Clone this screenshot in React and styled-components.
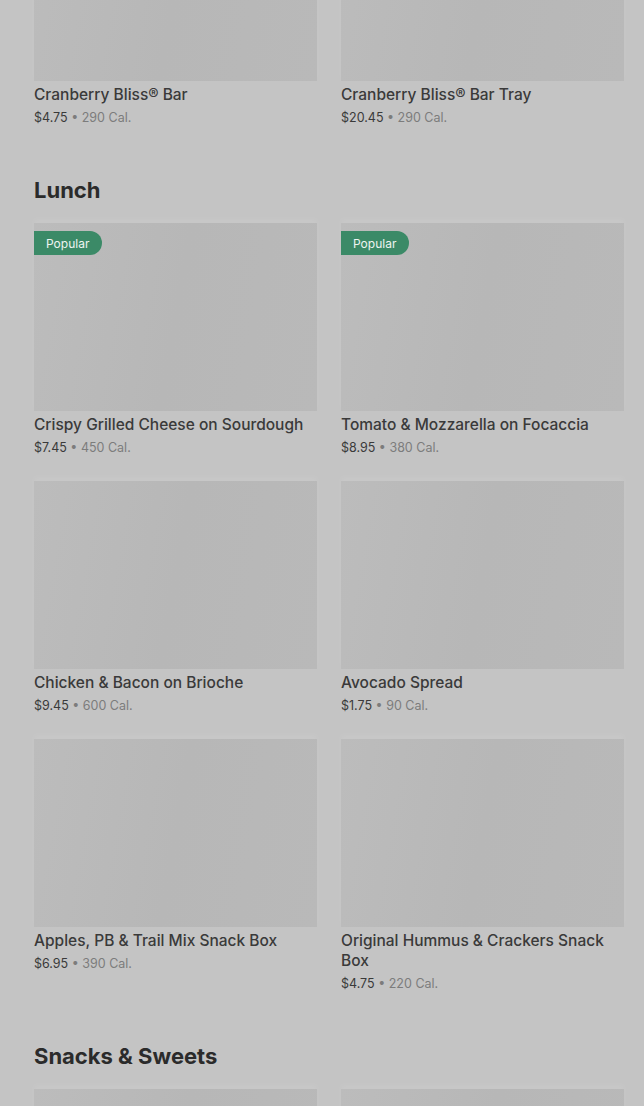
import React from "react";
import styled, { createGlobalStyle } from "styled-components";

const Global = createGlobalStyle`
  html, body { margin: 0; padding: 0; background: #c4c4c4; }
  body { font-family: Inter, "Noto Sans", sans-serif; overflow: hidden; }
`;

const Page = styled.div`
  padding: 0 20px 0 34px;
  background: #c4c4c4;
  height: 1106px;
  overflow: hidden;
`;

const Scrolled = styled.div`
  margin-top: -107px;
`;

const Section = styled.section`
  padding-top: ${(p) => (p.$first ? 0 : 48)}px;
`;

const Heading = styled.h2`
  margin: 0 0 19px;
  font-size: 22px;
  line-height: 28px;
  font-weight: 700;
  color: #2b2b2b;
  letter-spacing: 0;
`;

const Grid = styled.div`
  display: grid;
  grid-template-columns: 1fr 1fr;
  column-gap: 24px;
  row-gap: 23px;
`;

const Card = styled.div`
  display: flex;
  flex-direction: column;
  min-width: 0;
`;

const Thumb = styled.div`
  position: relative;
  height: 188px;
  background: linear-gradient(100deg, #bcbcbc 0%, #b7b7b7 50%, #b9b9b9 100%);
  box-shadow: 0 -4px 6px rgba(255, 255, 255, 0.08);
`;

const Badge = styled.span`
  position: absolute;
  top: 8px;
  left: 0;
  height: 24px;
  padding: 0 13px 0 12px;
  display: flex;
  align-items: center;
  background: #3b8a67;
  color: #eef4f0;
  font-size: 12px;
  border-radius: 0 12px 12px 0;
`;

const Name = styled.div`
  margin-top: 4px;
  font-size: 15.5px;
  line-height: 20px;
  font-weight: 500;
  color: #3a3a3a;
`;

const Meta = styled.div`
  margin-top: 3px;
  font-size: 12.5px;
  line-height: 20px;
  color: #3a3a3a;
`;

const Cal = styled.span`
  color: #7c7c7c;
`;

function Item({ name, price, cal, popular }) {
  return (
    <Card>
      <Thumb>{popular && <Badge>Popular</Badge>}</Thumb>
      {name && <Name>{name}</Name>}
      {price && (
        <Meta>
          {price} <Cal>• {cal} Cal.</Cal>
        </Meta>
      )}
    </Card>
  );
}

const top = [
  { name: "Cranberry Bliss® Bar", price: "$4.75", cal: 290 },
  { name: "Cranberry Bliss® Bar Tray", price: "$20.45", cal: 290 },
];

const lunch = [
  { name: "Crispy Grilled Cheese on Sourdough", price: "$7.45", cal: 450, popular: true },
  { name: "Tomato & Mozzarella on Focaccia", price: "$8.95", cal: 380, popular: true },
  { name: "Chicken & Bacon on Brioche", price: "$9.45", cal: 600 },
  { name: "Avocado Spread", price: "$1.75", cal: 90 },
  { name: "Apples, PB & Trail Mix Snack Box", price: "$6.95", cal: 390 },
  { name: "Original Hummus & Crackers Snack Box", price: "$4.75", cal: 220 },
];

const snacks = [{ id: "s1" }, { id: "s2" }];

export default function App() {
  return (
    <>
      <Global />
      <Page>
        <Scrolled>
          <Section $first>
            <Grid>
              {top.map((i) => (
                <Item key={i.name} {...i} />
              ))}
            </Grid>
          </Section>
          <Section>
            <Heading>Lunch</Heading>
            <Grid>
              {lunch.map((i) => (
                <Item key={i.name} {...i} />
              ))}
            </Grid>
          </Section>
          <Section>
            <Heading>Snacks &amp; Sweets</Heading>
            <Grid>
              {snacks.map((i) => (
                <Item key={i.id} {...i} />
              ))}
            </Grid>
          </Section>
        </Scrolled>
      </Page>
    </>
  );
}
